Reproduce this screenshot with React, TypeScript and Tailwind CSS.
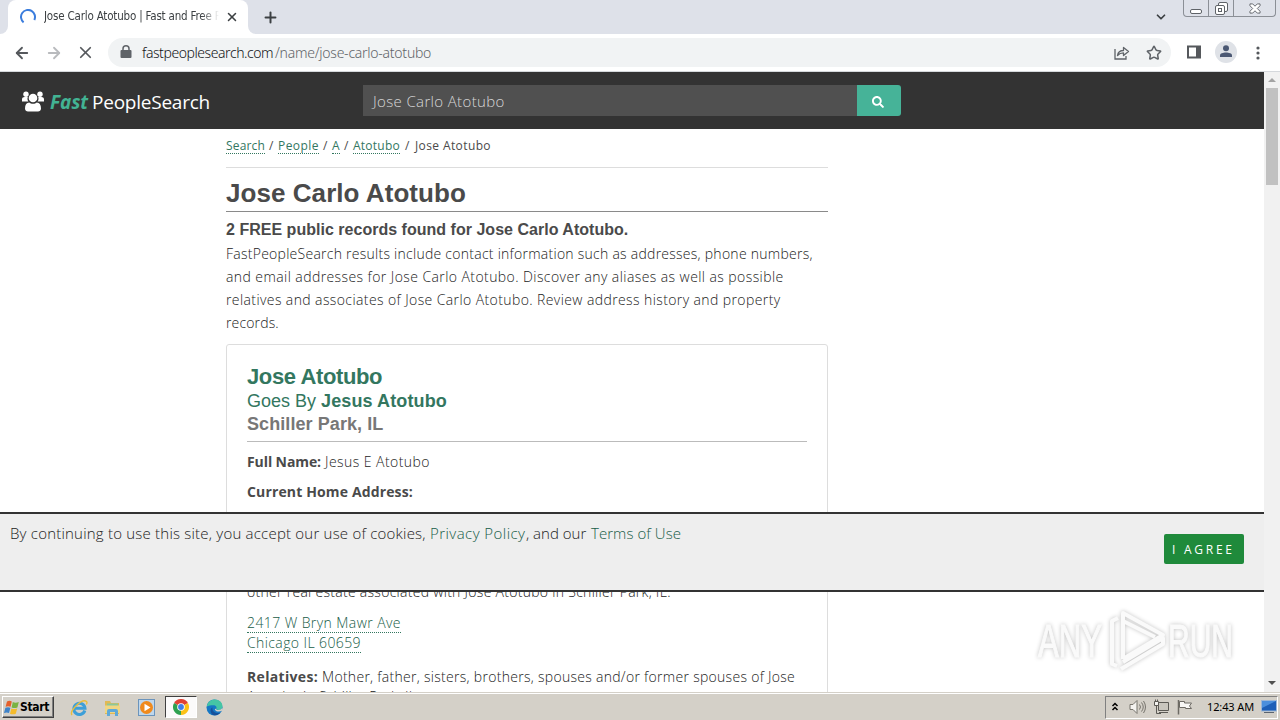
import type { ReactNode } from "react";
import { ArrowLeft, ArrowRight, ChevronDown, Plus, Star, X } from "lucide-react";
import { FaSearch } from "react-icons/fa";

function PeopleIcon() {
    return (
        <svg className="-mt-[2px]" width="22" height="21" viewBox="0 0 22 21" fill="#fff">
            <circle cx="4" cy="3.2" r="2.7" />
            <circle cx="18" cy="3.2" r="2.7" />
            <path d="M0 10.500V8.500C0 6.700 1.200 6 2.600 6h3.200c-.6 1.600-.4 3 .6 4.500zM22 10.500V8.500C22 6.700 20.800 6 19.400 6h-3.200c.6 1.600.4 3-.6 4.500z" />
            <circle cx="11" cy="7" r="4.300" />
            <path d="M3 17.500c0-4 1.600-6 4.200-6 1 .9 2.300 1.300 3.800 1.300s2.800-.4 3.800-1.300c2.600 0 4.200 2 4.200 6 0 2-1.400 3-3 3H6c-1.600 0-3-1-3-3z" />
        </svg>
    );
}

function TabStrip() {
    return (
        <div className="flex h-[34px] bg-[#dee1e9]">
            <div className="w-2 bg-white">
                <div className="h-full rounded-br-lg bg-[#dee1e9]" />
            </div>
            <div className="flex w-[240px] items-center rounded-t-lg bg-white pl-3">
                <svg width="16" height="16" viewBox="0 0 16 16" fill="none" stroke="#3b7ddd" strokeWidth="2">
                    <path d="M3.600 13.400A7 7 0 1 1 14.300 11" />
                </svg>
                <div className="ml-2 w-[175px] overflow-hidden whitespace-nowrap font-['DejaVu_Sans_Condensed','DejaVu_Sans',sans-serif] text-[11.5px] tracking-[-0.19px] text-[#3c4043] [mask-image:linear-gradient(to_right,#000_90%,transparent)]">
                    Jose Carlo Atotubo | Fast and Free P
                </div>
                <X className="ml-[6px]" size={14} strokeWidth={2.6} color="#3c4043" />
            </div>
            <div className="w-2 bg-white">
                <div className="h-full rounded-bl-lg bg-[#dee1e9]" />
            </div>
            <div className="flex w-[28px] items-center justify-center">
                <Plus size={17} strokeWidth={2.8} color="#3c4043" />
            </div>
            <div className="flex-1" />
            <div className="flex w-[29px] items-center">
                <ChevronDown size={14} strokeWidth={3} color="#3c4043" />
            </div>
            <div className="mr-[4px] flex h-[17px] w-[93px] rounded-b-[4px] border border-t-0 border-[#8b8f96]">
                <div className="flex w-[25px] items-end justify-center border-r border-[#8b8f96] pb-[2px]">
                    <div className="h-[5px] w-3 rounded-[2px] border border-[#5f6368] bg-white" />
                </div>
                <div className="flex w-[25px] items-center justify-center border-r border-[#8b8f96]">
                    <svg width="13" height="13" viewBox="0 0 13 13" fill="#fff" stroke="#5f6368">
                        <rect x="3.500" y=".5" width="9" height="9" rx="1.500" />
                        <rect x=".5" y="3.500" width="9" height="9" rx="1.500" />
                        <rect x="3.500" y="6.500" width="3" height="3" />
                    </svg>
                </div>
                <div className="flex flex-1 items-center justify-center">
                    <svg width="12" height="11" viewBox="0 0 13 12" fill="#fff" stroke="#5f6368" strokeWidth="1">
                        <path d="M1 1h3l2.500 2.500L9 1h3v2L9 6l3 3v2H9L6.500 8.500 4 11H1V9l3-3-3-3z" />
                    </svg>
                </div>
            </div>
        </div>
    );
}

function Toolbar() {
    return (
        <div className="flex h-[38px] items-center border-b border-[#d5d8dc] bg-white pl-[13px]">
            <ArrowLeft size={18} strokeWidth={2.4} color="#55585c" />
            <ArrowRight className="ml-[14px]" size={18} strokeWidth={2.4} color="#b9bbbe" />
            <X className="ml-[13px]" size={19} strokeWidth={2.2} color="#55585c" />
            <div className="ml-[13px] flex h-[29px] w-[1063px] items-center rounded-full bg-[#f1f3f4] pl-3">
                <svg className="-mt-[2px]" width="12" height="14" viewBox="0 0 12 14" fill="#5f6368">
                    <path d="M1.500 5h9q1 0 1 1v6q0 1-1 1h-9q-1 0-1-1V6q0-1 1-1z" />
                    <path d="M3 6V3.800a3 3 0 0 1 6 0V6" fill="none" stroke="#5f6368" strokeWidth="1.500" />
                </svg>
                <div className="ml-[10px] flex flex-1 whitespace-nowrap font-['Noto_Sans',sans-serif] text-sm font-light">
                    <span className="w-[133px] tracking-[-0.43px] text-[#111317]">fastpeoplesearch.com</span>
                    <span className="tracking-[-0.25px] text-[#5f6368]">/name/jose-carlo-atotubo</span>
                </div>
                <svg width="16" height="15" viewBox="0 0 16 15" fill="none" stroke="#5f6368" strokeWidth="1.300">
                    <path d="M1 4v10h11v-3" />
                    <path d="M3.500 10.500c.6-3.600 2.700-5 6-5V2.500L14.500 6.500l-5 4v-2.600c-2.700 0-4.400.8-6 2.600z" strokeLinejoin="round" />
                </svg>
                <Star className="ml-4 mr-[9px]" size={16} strokeWidth={2.3} color="#5f6368" />
            </div>
            <svg className="-mt-[2px] ml-[16px]" width="14" height="14" viewBox="0 0 14 14" fill="none" stroke="#55585c" strokeWidth="2">
                <path d="M1 1.500h12v11H1z" />
                <path d="M9 1h4v12H9z" fill="#55585c" stroke="none" />
            </svg>
            <div className="-mt-[2px] ml-[14px] flex size-[22px] items-center justify-center rounded-full bg-[#dfe2e7]">
                <svg width="12" height="13" viewBox="0 0 12 13" fill="#4b5873">
                    <circle cx="6" cy="3.200" r="3" />
                    <path d="M0 12V10.500C0 8.500 3 7.600 6 7.600s6 .9 6 2.900V12z" />
                </svg>
            </div>
            <svg className="ml-[19px]" width="4" height="14" viewBox="0 0 4 14" fill="#55585c">
                <circle cx="2" cy="2" r="1.600" />
                <circle cx="2" cy="7" r="1.600" />
                <circle cx="2" cy="12" r="1.600" />
            </svg>
        </div>
    );
}

function SiteHeader() {
    return (
        <header className="flex h-[57px] shrink-0 items-center bg-[#333]">
            <div className="flex w-[363px] items-center whitespace-nowrap pl-[22px] pt-[3px] text-[19px]">
                <PeopleIcon />
                <span className="ml-[6px] w-[42px] font-bold italic text-[#42b393]">Fast</span>
                <span className="tracking-[-0.23px] text-white">PeopleSearch</span>
            </div>
            <div className="flex h-[31px] w-[538px]">
                <div className="flex flex-1 items-center bg-[#505050] pl-[10px] pt-[2px] text-[15px] font-light tracking-[0.36px] text-[#d8d8d8]">
                    Jose Carlo Atotubo
                </div>
                <div className="flex w-11 items-center justify-center rounded-r-[3px] bg-[#46b398] pr-[2px] pt-[2px]">
                    <FaSearch size={12} color="#fff" />
                </div>
            </div>
        </header>
    );
}

function Crumb({ children }: { children: ReactNode }) {
    return <span className="inline-block h-4 border-b border-dotted border-[#33775f] leading-4 text-[#33775f]">{children}</span>;
}

function Results() {
    return (
        <main className="ml-[226px] w-[602px] text-sm text-[#4a4a4a]">
            <nav className="flex h-[39px] items-center whitespace-nowrap border-b border-[#ddd] pb-[4px] text-xs leading-4">
                <div className="flex w-[43px] tracking-[0.17px]"><Crumb>Search</Crumb></div>
                <div className="w-[9px]">/</div>
                <div className="flex w-[45px] tracking-[0.45px]"><Crumb>People</Crumb></div>
                <div className="w-[9px]">/</div>
                <div className="flex w-[12px]"><Crumb>A</Crumb></div>
                <div className="w-[9px]">/</div>
                <div className="flex w-[52px] tracking-[0.24px]"><Crumb>Atotubo</Crumb></div>
                <div className="w-[10px]">/</div>
                <div className="tracking-[0.39px]">Jose Atotubo</div>
            </nav>
            <h1 className="h-11 border-b border-[#8a8a8a] pt-[6px] font-['Liberation_Sans',Arial,sans-serif] text-[26px] font-bold leading-[38px] tracking-[0.06px]">
                Jose Carlo Atotubo
            </h1>
            <h2 className="h-[30px] pt-[6px] font-['Liberation_Sans',Arial,sans-serif] text-base font-bold leading-6 tracking-[0.02px]">
                2 FREE public records found for Jose Carlo Atotubo.
            </h2>
            <div className="whitespace-nowrap font-light leading-[23px] text-[#222]">
                <p className="tracking-[0.26px]">FastPeopleSearch results include contact information such as addresses, phone numbers,</p>
                <p className="tracking-[0.42px]">and email addresses for Jose Carlo Atotubo. Discover any aliases as well as possible</p>
                <p className="tracking-[0.4px]">relatives and associates of Jose Carlo Atotubo. Review address history and property</p>
                <p className="tracking-[0.15px]">records.</p>
            </div>
            <Card />
        </main>
    );
}

function Card() {
    return (
        <div className="mt-[10px] h-[400px] whitespace-nowrap rounded-[3px] border border-[#ddd] px-5 pt-5 text-[#222]">
            <div className="h-[77px] border-b border-[#bbb] font-['Liberation_Sans',Arial,sans-serif] text-lg leading-[23px]">
                <div className="h-[25px] text-[22px] font-bold leading-6 tracking-[-0.38px] text-[#33775f]">Jose Atotubo</div>
                <div className="text-[#33775f]">
                    Goes By <b className="tracking-[0.12px]">Jesus Atotubo</b>
                </div>
                <div className="font-bold tracking-[0.08px] text-[#777]">Schiller Park, IL</div>
            </div>
            <div className="mt-[10px] flex h-5 leading-5">
                <b className="w-[78px] tracking-[-0.09px] text-[#4a4a4a]">Full Name:</b>
                <span className="font-light tracking-[0.45px]">Jesus E Atotubo</span>
            </div>
            <div className="mt-[10px] h-5 font-bold leading-5 tracking-[0.14px] text-[#4a4a4a]">Current Home Address:</div>
            <div className="mt-[80px] h-5 font-light leading-5 tracking-[0.29px]">
                other real estate associated with Jose Atotubo in Schiller Park, IL.
            </div>
            <div className="mt-[11px] font-light leading-5 text-[#175c47]">
                <div className="h-5"><span className="inline-block h-5 border-b border-dotted border-[#33775f] tracking-[0.42px]">2417 W Bryn Mawr Ave</span></div>
                <div className="h-5"><span className="inline-block h-5 border-b border-dotted border-[#33775f] tracking-[0.4px]">Chicago IL 60659</span></div>
            </div>
            <div className="mt-[14px] flex h-5 leading-5">
                <b className="w-[75px] tracking-[0.32px] text-[#4a4a4a]">Relatives:</b>
                <span className="font-light tracking-[0.29px]">Mother, father, sisters, brothers, spouses and/or former spouses of Jose</span>
            </div>
            <div className="font-light leading-5 tracking-[0.2px]">Atotubo in Schiller Park, IL.</div>
        </div>
    );
}

function CookieBar() {
    return (
        <div className="absolute inset-x-0 top-[440px] flex h-20 items-start justify-between whitespace-nowrap border-y-2 border-[#333] bg-[#eee] pl-[10px] pr-5 text-[15px] font-light leading-5 text-[#222]">
            <div className="flex pt-[9px]">
                <span className="w-[420px] tracking-[0.21px]">By continuing to use this site, you accept our use of cookies,</span>
                <span className="w-[96px] tracking-[0.45px] text-[#175c47]">Privacy Policy</span>
                <span className="w-[65px]">, and our</span>
                <span className="tracking-[0.06px] text-[#175c47]">Terms of Use</span>
            </div>
            <button className="mt-5 h-[30px] w-20 rounded-[2px] bg-[#1f8a3b] pl-2 pt-[2px] text-left text-xs font-normal tracking-[2.75px] text-white">
                I AGREE
            </button>
        </div>
    );
}

function Watermark() {
    return (
        <svg
            className="absolute left-[1032px] top-[530px] drop-shadow-[0_0_2px_rgba(0,0,0,0.24)]"
            width="206"
            height="76"
            viewBox="0 0 206 76"
            fill="#fafafa"
        >
            <text x="6" y="55" fontSize="46" textLength="64" lengthAdjust="spacingAndGlyphs" fontFamily="Liberation Sans" stroke="#fafafa">
                ANY
            </text>
            <text x="136" y="55" fontSize="46" textLength="65" lengthAdjust="spacingAndGlyphs" fontFamily="Liberation Sans" stroke="#fafafa">
                RUN
            </text>
            <g fill="none" stroke="#fafafa" strokeWidth="4" strokeLinejoin="round">
                <path d="M91 57V11l40 22-40 24" />
                <path d="M91 19l32 16" />
                <path d="M86 16l-6 3v43l5 2M89 67l42-25v-6L91 60" />
            </g>
        </svg>
    );
}

function Scrollbar() {
    return (
        <div className="flex w-4 flex-col items-center bg-[#f1f1f1]">
            <div className="flex h-4 items-center">
                <div className="size-0 border-x-4 border-b-4 border-x-transparent border-b-[#a3a3a3]" />
            </div>
            <div className="h-[97px] w-3 bg-[#c1c1c1]" />
            <div className="flex-1" />
            <div className="flex h-[18px] items-center">
                <div className="size-0 border-x-4 border-t-4 border-x-transparent border-t-[#505050]" />
            </div>
        </div>
    );
}

function StartFlag() {
    return (
        <svg width="16" height="15" viewBox="0 0 16 15">
            <path d="M3 1.500q2.500-1.400 4.800 0L6.600 6.800Q4.200 5.600 1.600 6.800z" fill="#e5602c" />
            <path d="M8.800 2q2.500 1.300 6 0L13.400 7.400q-3 1.300-5.800 0z" fill="#7ab342" />
            <path d="M1.400 7.800q2.600-1.300 5 0L5 13Q2.800 11.800 0 13z" fill="#3f83c9" />
            <path d="M7.400 8.400q2.800 1.300 5.800 0L11.800 13.700q-3 1.300-5.800 0z" fill="#f4bb2b" />
        </svg>
    );
}

function Taskbar() {
    return (
        <footer className="flex h-7 items-center border-t border-[#d4d0c8] bg-[#d4d0c8] pl-[2px] pr-[2px] shadow-[inset_0_1px_0_#fff]">
            <div className="mt-px flex h-[22px] w-[52px] items-center border border-b-[#404040] border-l-white border-r-[#404040] border-t-white pl-px shadow-[inset_-1px_-1px_0_#808080]">
                <StartFlag />
                <span className="font-['DejaVu_Sans_Condensed','DejaVu_Sans',sans-serif] text-xs font-bold tracking-[-0.35px] text-black">Start</span>
            </div>
            <svg className="ml-4 mt-[2px]" width="18" height="18" viewBox="0 0 18 18" fill="none">
                <path d="M14.800 11.500A5.600 5.600 0 1 1 15 9.300H5" stroke="#3d9fd8" strokeWidth="3" />
                <path d="M2 16C-1 12 12-1 16.500 2.500c.7.600.4 2-.2 3" stroke="#e9bd3b" strokeWidth="1.400" />
            </svg>
            <svg className="ml-4 mt-[2px]" width="17" height="18" viewBox="0 0 17 18">
                <path d="M1 2h5l1 2h8v11H1z" fill="#e0b955" />
                <path d="M3 4.500h11V9H3z" fill="#8cc79a" />
                <path d="M1 6.500h15V14H1z" fill="#f0d683" />
                <path d="M3 17v-5q0-2 2-2h7q2 0 2 2v5h-3v-4H6v4z" fill="#5fa9d8" />
            </svg>
            <svg className="ml-[17px] mt-px" width="17" height="17" viewBox="0 0 17 17">
                <rect x=".5" y=".5" width="16" height="16" fill="#bfd7ec" stroke="#6b94bc" />
                <circle cx="8.500" cy="8.500" r="6.500" fill="#f08a1d" />
                <path d="M6.500 4.700v7.600l6-3.800z" fill="#fff" />
            </svg>
            <div className="ml-[10px] mt-px flex h-[22px] w-8 items-center justify-center border border-b-white border-l-[#404040] border-r-white border-t-[#404040] bg-[#fbfafa]">
                <svg width="16" height="16" viewBox="0 0 16 16">
                    <path d="M8 8L1.070 4A8 8 0 0 1 14.930 4z" fill="#e04234" />
                    <path d="M8 8L14.930 4A8 8 0 0 1 8 16z" fill="#fbc116" />
                    <path d="M8 8V16A8 8 0 0 1 1.070 4z" fill="#2ea150" />
                    <circle cx="8" cy="8" r="3.800" fill="#fff" />
                    <circle cx="8" cy="8" r="2.900" fill="#3f7fe8" />
                </svg>
            </div>
            <svg className="ml-[9px] mt-px" width="17" height="17" viewBox="0 0 17 17">
                <circle cx="8.500" cy="8.500" r="8" fill="#1577c4" />
                <path d="M.8 7.500C1.500 3 5 .5 8.800.5c4.600 0 7.700 3.300 7.700 6.700 0 2.400-1.800 3.800-4 3.800-1.600 0-2.600-.5-2.200-1.200.5-.8.600-3.600-3-3.600-2.600 0-5 .5-6.500 1.300z" fill="#45c5a5" />
                <path d="M6.500 8.500c-.8 3.500 2.500 6.500 7.500 5.200-1.500 2-4 2.800-6 2.600C4 15 3.500 9.500 6.500 8.500z" fill="#17509a" />
                <path d="M10.300 9.800c-.5.700.6 1.300 2.200 1.300 1.500 0 3-.7 3.600-2l.3 2.500c-2.800 1.900-7.600 1-7.600-1.600z" fill="#d4d0c8" />
            </svg>
            <div className="flex-1" />
            <div className="mt-px flex h-[23px] w-[173px] items-center border border-b-white border-l-[#808080] border-r-white border-t-[#808080] pl-[5px]">
                <svg className="-mt-[2px]" width="8" height="9" viewBox="0 0 8 9" fill="none" stroke="#000" strokeWidth="1.500">
                    <path d="M1.500 4L4 1.500 6.500 4M1.500 8L4 5.500 6.500 8" />
                </svg>
                <svg className="ml-[10px]" width="17" height="16" viewBox="0 0 17 16" fill="#f4f3f0" stroke="#77746d">
                    <path d="M1 5.500h3L8 1.500v13L4 10.500H1z" />
                    <path d="M10.500 5.500q2 2.500 0 5M12.500 3.500q3.500 4.500 0 9M14.500 2q4 6 0 12" fill="none" />
                </svg>
                <svg className="ml-[7px]" width="17" height="16" viewBox="0 0 17 16" fill="#f4f3f0" stroke="#5c5a55">
                    <path d="M5.500 3.500h10v8h-10z" fill="#c9c6be" />
                    <path d="M6 13.500h9M3.500 7v7.500H8" fill="none" />
                    <path d="M1.500 2.500h4v4h-4zM2.500.5v2M4.500.5v2" />
                </svg>
                <svg className="ml-[7px]" width="16" height="16" viewBox="0 0 16 16" fill="#f8f7f5" stroke="#6d6a64">
                    <path d="M1.500 1v14.500" strokeWidth="1.500" />
                    <path d="M2.500 2.500h5v1.500h7L12.500 7l2 2.500h-6V8.500h-6z" />
                </svg>
                <span className="ml-[14px] w-[54px] whitespace-nowrap font-['Noto_Sans',sans-serif] text-[11px] tracking-[-0.12px] text-black">12:43 AM</span>
                <svg width="16" height="14" viewBox="0 0 16 14">
                    <rect x=".5" y=".5" width="15" height="10.500" fill="#1d5fb8" stroke="#9db7d6" />
                    <path d="M1 1h14L1 8z" fill="#4b8fdd" />
                    <path d="M3 12.500h10" stroke="#5b6470" />
                </svg>
            </div>
        </footer>
    );
}

export default function App() {
    return (
        <div className="flex h-[720px] w-[1280px] flex-col overflow-hidden bg-white font-['Open_Sans','Noto_Sans',sans-serif]">
            <TabStrip />
            <Toolbar />
            <div className="flex h-[620px]">
                <div className="relative flex flex-1 flex-col overflow-hidden">
                    <SiteHeader />
                    <Results />
                    <CookieBar />
                    <Watermark />
                </div>
                <Scrollbar />
            </div>
            <Taskbar />
        </div>
    );
}
